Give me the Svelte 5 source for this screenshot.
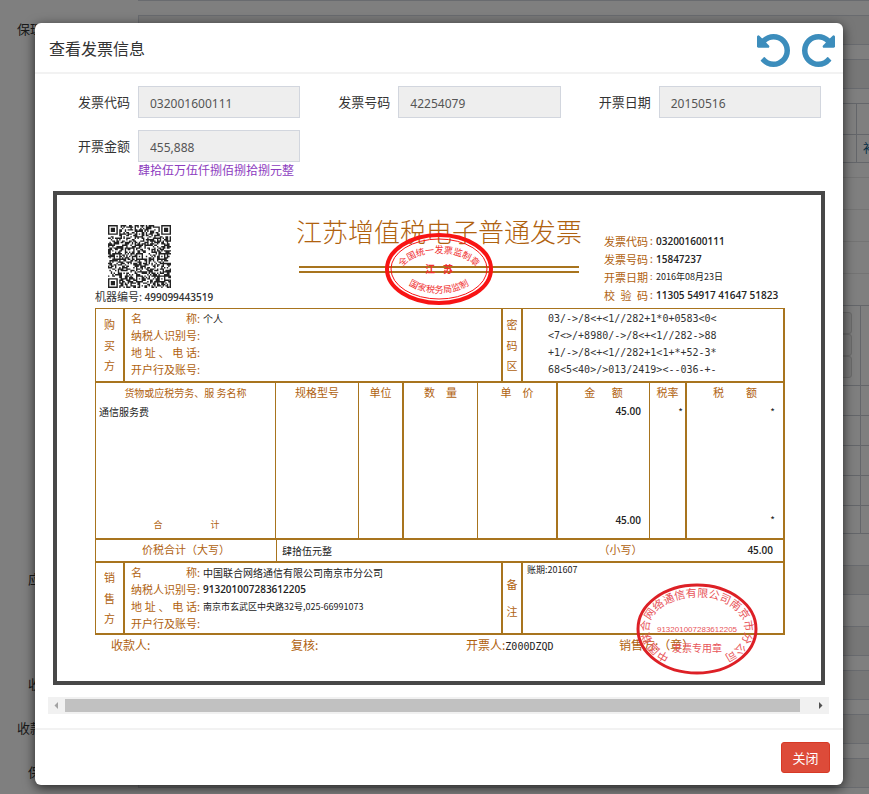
<script>
  const code = '032001600111';
  const fields = [
    { id: 'code', label: '发票代码', value: code },
    { id: 'number', label: '发票号码', value: '42254079' },
    { id: 'date', label: '开票日期', value: '20150516' },
    { id: 'amount', label: '开票金额', value: '455,888', hint: '肆拾伍万伍仟捌佰捌拾捌元整' }
  ];
  const cipher = [
    '03/->/8<+<1//282+1*0+0583<0<',
    '<7<>/+8980/->/8<+<1//282->88',
    '+1/->/8<+<1//282+1<1+*+52-3*',
    '68<5<40>/>013/2419><--036-+-'
  ];
  const meta = [
    { label: '发票代码', value: code, strong: true },
    { label: '发票号码', value: '15847237', strong: true },
    { label: '开票日期', value: '2016年08月23日' },
    { label: '校验码', value: '11305 54917 41647 51823', strong: true }
  ];
  const partyLabels = ['名称', '纳税人识别号', '地址、电话', '开户行及账号'];
  const buyer = ['个人', '', '', ''];
  const seller = [
    '中国联合网络通信有限公司南京市分公司',
    '913201007283612205',
    '南京市玄武区中央路32号,025-66991073',
    ''
  ];

  // QR symbol, version 7: 45 x 45 modules
  const size = 45;
  function square(x, y, cx, cy, r) {
    const d = Math.max(Math.abs(x - cx), Math.abs(y - cy));
    return d <= r ? d : -1;
  }
  function qrPath() {
    let seed = 20160823;
    let d = '';
    for (let y = 0; y < size; y++) {
      for (let x = 0; x < size; x++) {
        seed = (seed * 1103515245 + 12345) % 2147483648;
        let on = (seed >> 12) % 100 < 52;
        for (const [cx, cy] of [[3, 3], [41, 3], [3, 41]]) {
          const k = square(x, y, cx, cy, 4);
          if (k >= 0) on = k !== 2 && k !== 4;
        }
        for (const [cx, cy] of [[22, 6], [6, 22], [22, 22], [38, 22], [22, 38], [38, 38]]) {
          const k = square(x, y, cx, cy, 2);
          if (k >= 0) on = k !== 1;
        }
        if (on) d += `M${x} ${y}h1v1h-1z`;
      }
    }
    return d;
  }
  const qr = qrPath();
  const undo =
    'M1664 896q0 156-61 298t-164 245-245 164-298 61q-172 0-327-72.5T305 1387q-7-10-6.5-22.5t8.5-20.5l137-138q10-9 25-9 16 2 23 12 73 95 179 147t225 52q104 0 198.5-40.5T1258 1258t109.500-163.500T1408 896t-40.500-198.500T1258 534t-163.500-109.500T896 384q-98 0-188 35.500T548 521l137 138q31 30 14 69-17 40-59 40H192q-26 0-45-19t-19-45V256q0-42 40-59 39-17 69 14l130 129q107-101 244.500-156.500T896 128q156 0 298 61t245 164 164 245 61 298z';
</script>

{#snippet party(values)}
  <dl class="party">
    {#each partyLabels as label, i}
      <div>
        <dt>{#each label as ch, k}<span>{ch}{k === label.length - 1 ? ':' : ''}</span>{/each}</dt>
        <dd class:num={i === 1} class:small={i === 2}>{values[i]}</dd>
      </div>
    {/each}
  </dl>
{/snippet}

{#snippet upright(text)}
  <div class="upright">{#each text as ch}<span>{ch}</span>{/each}</div>
{/snippet}

<div class="page">
  <div class="behind" aria-hidden="true">
    <div class="cut"></div>
    <div class="row"><span>保理</span><div class="box"></div></div>
    <div class="row"><span></span><div class="box"></div></div>
    <div class="grid-a"><div></div><div></div><div></div><div class="link">补</div></div>
    <div class="list"><div></div><div></div><div></div><div></div></div>
    <div class="grid-b">
      <div class="tall"><div class="stack"><i></i><i></i><i></i></div><div></div></div>
      <div class="line"><b></b><b></b></div>
      <div class="line"><b></b><b></b></div>
      <div class="line"><b></b><b></b></div>
      <div class="line"><b></b><b></b></div>
      <div class="line"><b></b><b></b></div>
    </div>
    <div class="row wide"><span class="near">应</span><div class="box"></div></div>
    <div class="row wide"><span></span><div class="box"></div></div>
    <div class="row"><span class="near">收</span><div class="box"></div></div>
    <div class="row"><span>收款</span><div class="box"></div></div>
    <div class="row"><span class="near">保</span><div class="box"></div></div>
  </div>

  <div class="overlay">
    <div class="modal" role="dialog" aria-modal="true" aria-labelledby="modal-title">
      <header>
        <h4 id="modal-title">查看发票信息</h4>
        <button class="turn" aria-label="向左旋转">
          <svg viewBox="128 128 1536 1536"><path d={undo} /></svg>
        </button>
        <button class="turn" aria-label="向右旋转">
          <svg viewBox="128 128 1536 1536"><path transform="translate(1792 0) scale(-1 1)" d={undo} /></svg>
        </button>
      </header>

      <form>
        {#each fields as f}
          <div class="field">
            <label for={f.id}>{f.label}</label>
            <div>
              <input id={f.id} type="text" readonly value={f.value} />
              {#if f.hint}<p>{f.hint}</p>{/if}
            </div>
          </div>
        {/each}
      </form>

      <div class="invoice">
        <div class="head">
          <div class="machine">
            <svg class="qr" viewBox="0 0 45 45"><path d={qr} /></svg>
            <div><span>机器编号:</span> <b>499099443519</b></div>
          </div>
          <div class="name">
            <h5>江苏增值税电子普通发票</h5>
            <div class="rule"></div>
            <svg class="seal-top" viewBox="0 0 110 74">
              <defs>
                <path id="top-arc" d="M16 43A39 22 0 0 1 94 43" />
                <path id="bottom-arc" d="M14 36A41 25 0 0 0 96 36" />
              </defs>
              <ellipse cx="55" cy="37" rx="52" ry="34" stroke-width="4" />
              <ellipse cx="55" cy="37" rx="48" ry="30" stroke-width="1" />
              <text font-size="9"><textPath href="#top-arc" startOffset="50%">全国统一发票监制章</textPath></text>
              <text font-size="10" font-weight="700" x="46" y="41">江</text>
              <text font-size="10" font-weight="700" x="64" y="41">苏</text>
              <text font-size="9"><textPath href="#bottom-arc" startOffset="50%">国家税务局监制</textPath></text>
            </svg>
          </div>
          <dl class="meta">
            {#each meta as m}
              <div>
                <dt>{#each m.label as ch}<span>{ch}</span>{/each}</dt>
                <dd class:num={m.strong}><i>:</i>{m.value}</dd>
              </div>
            {/each}
          </dl>
        </div>

        <div class="sheet">
          <section class="buyer">
            {@render upright('购买方')}
            {@render party(buyer)}
            {@render upright('密码区')}
            <div class="cipher">{#each cipher as line}<div>{line}</div>{/each}</div>
          </section>

          <table>
            <colgroup>
              <col /><col class="c83" /><col class="c45" /><col class="c74" /><col class="c80" /><col class="c92" /><col class="c37" /><col class="c96" />
            </colgroup>
            <thead>
              <tr>
                <th class="long">货物或应税劳务、服 务名称</th><th>规格型号</th><th>单位</th><th>数&emsp;量</th><th>单&emsp;价</th><th>金&emsp;&ensp;额</th><th>税率</th><th>税&emsp;&emsp;额</th>
              </tr>
            </thead>
            <tbody>
              <tr class="item">
                <td class="left">通信服务费</td><td></td><td></td><td></td><td></td><td class="num">45.00</td><td>*</td><td>*</td>
              </tr>
              <tr class="sum">
                <td class="sum-label"><span>合</span><span>计</span></td><td></td><td></td><td></td><td></td><td class="num">45.00</td><td></td><td>*</td>
              </tr>
            </tbody>
          </table>

          <section class="total">
            <div class="caption">价税合计（大写）</div>
            <div class="words">肆拾伍元整</div>
            <div class="caption">（小写）</div>
            <div class="num">45.00</div>
          </section>

          <section class="seller">
            {@render upright('销售方')}
            {@render party(seller)}
            {@render upright('备注')}
            <div class="remark">账期:201607</div>
          </section>
        </div>

        <div class="sign">
          <div>收款人:</div>
          <div>复核:</div>
          <div>开票人:<span>Z000DZQD</span></div>
          <div>销售方:（章）</div>
          <svg class="seal-bottom" viewBox="0 0 122 92">
            <defs><path id="ring" d="M61 78A48 32 0 0 1 61 14A48 32 0 0 1 61 78" /></defs>
            <ellipse cx="61" cy="46" rx="59" ry="44" stroke-width="3" />
            <text font-size="11"><textPath href="#ring" startOffset="50%">中国联合网络通信有限公司南京市分公司</textPath></text>
            <text class="digits" font-size="8" x="61" y="49">913201007283612205</text>
            <text font-size="10" x="61" y="69">发票专用章</text>
          </svg>
        </div>
      </div>

      <div class="scroll">
        <button aria-label="向左滚动"><svg viewBox="0 0 17 17"><path fill="#a3a3a3" d="M10 5v7L6.500 8.500z" /></svg></button>
        <div class="track"><div class="thumb"></div></div>
        <button aria-label="向右滚动"><svg viewBox="0 0 17 17"><path fill="#505050" d="M7 5v7l3.500-3.500z" /></svg></button>
      </div>

      <footer><button class="close">关闭</button></footer>
    </div>
  </div>
</div>

<style>
  :global(body) { background: #fff; }
  * { box-sizing: border-box; }
  .page {
    display: grid;
    min-height: 100vh;
    overflow: hidden;
    font: 13px/18px "Noto Sans", "Noto Sans CJK SC", sans-serif;
    color: #333;
  }
  .behind, .overlay { grid-area: 1 / 1; min-width: 0; }
  h4, h5, p, dl, dd { margin: 0; font-weight: 400; }
  i { font-style: normal; }
  button { padding: 0; border: 0; background: none; font: inherit; cursor: pointer; }

  /* form underneath the dialog */
  .cut { height: 1px; margin-left: 138px; background: #d2d6de; }
  .row { display: grid; grid-template-columns: 138px 1fr; height: 30px; margin-top: 14px; line-height: 28px; }
  .row span { padding-left: 17px; }
  .row .near { padding-left: 28px; }
  .row.wide { margin-top: 31px; }
  .box { background: #eee; border: 1px solid #d2d6de; border-right: 0; }
  .grid-a { display: grid; grid-template: 31px 28px / 1fr 13px; height: 60px; margin: 14px 0 14px 138px; border-top: 1px solid #c8ccd4; }
  .grid-a div { border-bottom: 1px solid #c8ccd4; line-height: 28px; }
  .grid-a div:nth-child(even) { border-left: 1px solid #c8ccd4; }
  .grid-a .link { padding-left: 6px; font-size: 12px; color: #0b5c8a; white-space: nowrap; overflow: hidden; }
  .list { margin-left: 138px; }
  .list div { height: 32px; border-top: 1px solid #e8e8e8; }
  .grid-b { margin-left: 138px; border-top: 1px solid #c8ccd4; }
  .tall { display: grid; grid-template-columns: 1fr 9px; height: 80px; border-bottom: 1px solid #c8ccd4; }
  .tall > div + div { border-left: 1px solid #c8ccd4; }
  .stack { padding: 6px 8px 0 0; }
  .stack i { display: block; height: 22px; border: 1px solid #d4d4d4; border-radius: 3px; background: #f0f0f0; }
  .line { display: grid; grid-template-columns: 1fr 9px; height: 30px; border-bottom: 1px solid #c8ccd4; }
  .line:last-child { height: 28px; }
  .line b + b { border-left: 1px solid #c8ccd4; }

  .overlay { padding: 23px 26px 9px 35px; background: rgba(0, 0, 0, 0.5); }
  .modal { background: #fff; border-radius: 6px; box-shadow: 0 3px 12px rgba(0, 0, 0, 0.7); }
  header { display: flex; align-items: center; gap: 12px; height: 51px; padding: 4px 8px 0 14px; border-bottom: 2px solid #f2f2f2; }
  h4 { flex: 1; font-size: 16px; line-height: 26px; padding-bottom: 2px; }
  .turn, .turn svg { display: block; width: 33px; height: 33px; }
  .turn { margin-top: 2px; }
  .turn svg { fill: #3c8dbc; }

  form { display: grid; grid-template-columns: repeat(3, 1fr); row-gap: 12px; padding: 12px 14px 12px 13px; }
  .field { display: grid; grid-template-columns: 82px minmax(0, 1fr); gap: 8px; padding-right: 8px; }
  .field label { text-align: right; line-height: 32px; }
  .field input {
    display: block; width: 100%; height: 32px; padding: 3px 11px 0; border: 1px solid #d2d6de; border-radius: 0;
    background: #eee; color: #555; font: 12px "Noto Sans", sans-serif; outline: 0;
  }
  .field p { font-size: 12px; line-height: 17px; color: #8d3cc0; white-space: nowrap; }

  .invoice {
    margin: 0 18px; border: 4px solid #484848; padding: 0 36px 0 38px; color: #222;
    font: 10px/17px "Noto Sans CJK SC", sans-serif;
  }
  .num { font-family: "Open Sans", sans-serif; font-weight: 600; }
  .head { display: flex; justify-content: space-between; height: 113px; color: #b0620f; }
  .machine { width: 179px; padding-top: 30px; color: #333; font-size: 11px; }
  .qr { display: block; width: 63px; height: 63px; margin-left: 13px; fill: #222; }
  .machine b { font: 600 10px "Open Sans", sans-serif; }
  .name { position: relative; width: 286px; padding-top: 19px; }
  h5 { font-size: 26px; font-weight: 300; line-height: 34px; white-space: nowrap; }
  .rule { height: 7px; margin: 18px 3px 0; border: solid #a8741e; border-width: 2px 0; }
  .seal-top { position: absolute; left: 88px; top: 37px; width: 110px; }
  .seal-top, .seal-bottom { fill: none; stroke: #f81414; text-anchor: middle; }
  .seal-top text { fill: #f03030; stroke: none; }
  .meta { width: 181px; padding-top: 37px; }
  .meta div { display: flex; line-height: 18px; height: 18px; white-space: nowrap; }
  .meta dt { display: flex; justify-content: space-between; width: 44px; font-size: 11px; }
  .meta dd { color: #222; }
  .meta dd:not(.num) { font-size: 9px; }
  .meta i { display: inline-block; width: 8px; padding-left: 2px; color: #b0620f; }

  .sheet { border: solid #a8741e; border-width: 1px 2px 2px 1px; }
  .buyer, .seller { display: grid; grid-template-columns: 29px minmax(0, 1fr) 20px 260px; color: #b0620f; }
  .buyer { height: 74px; border-bottom: 2px solid #a8741e; }
  .seller { height: 70px; }
  .upright { display: flex; flex-direction: column; align-items: center; justify-content: space-evenly; font-size: 11px; line-height: 11px; border-right: 2px solid #a8741e; }
  .party { padding: 1px 0 0 6px; border-right: 2px solid #a8741e; }
  .party div { display: flex; gap: 3px; height: 17px; white-space: nowrap; }
  .party dt { display: flex; justify-content: space-between; width: 69px; font-size: 11px; }
  .party dd { color: #222; }
  .party .small { font-size: 9px; }
  .cipher { padding: 1px 0 0 25px; color: #333; font: 10px/17px "DejaVu Sans Mono", monospace; white-space: pre; }

  table { width: 100%; table-layout: fixed; border-collapse: separate; border-spacing: 0; border-bottom: 2px solid #a8741e; }
  .c83 { width: 83px; } .c45 { width: 45px; } .c74 { width: 74px; } .c80 { width: 80px; }
  .c92 { width: 92px; } .c37 { width: 37px; } .c96 { width: 96px; }
  th, td { padding: 0 8px 0 0; border-right: 1px solid #a8741e; line-height: 19px; text-align: right; vertical-align: top; }
  th { padding: 0; font-size: 11px; font-weight: 400; color: #b0620f; text-align: center; white-space: nowrap; }
  th.long { font-size: 10px; }
  th:nth-child(3), td:nth-child(3), th:nth-child(5), td:nth-child(5), th:nth-child(7), td:nth-child(7) { border-right-width: 2px; }
  th:last-child, td:last-child { border-right: 0; }
  td:nth-child(7) { padding-right: 2px; }
  td.left { padding-left: 3px; text-align: left; }
  .item td { height: 109px; }
  .sum td { height: 27px; line-height: 18px; }
  .sum .sum-label { padding: 0 0 0 2px; text-align: center; font-size: 9px; line-height: 27px; color: #b0620f; }
  .sum-label span { margin: 0 24px; }

  .total { display: grid; grid-template-columns: minmax(0, 1fr) 298px 93px 116px; height: 23px; border-bottom: 2px solid #a8741e; line-height: 21px; }
  .caption { text-align: center; font-size: 11px; line-height: 19px; color: #b0620f; }
  .total .words { padding-left: 5px; border-left: 1px solid #a8741e; }
  .total .num { text-align: right; padding-right: 10px; }
  .remark { padding-left: 4px; font-size: 9px; line-height: 14px; color: #222; }

  .sign { position: relative; display: grid; grid-template-columns: 180px 175px minmax(0, 1fr) 166px; height: 46px; padding-left: 16px; font-size: 12px; line-height: 20px; color: #b0620f; white-space: nowrap; }
  .sign span { color: #222; font: 10px "DejaVu Sans Mono", monospace; }
  .seal-bottom { position: absolute; right: 27px; bottom: 6px; width: 122px; stroke: #dd2026; }
  .seal-bottom text { fill: #e8555a; stroke: none; }
  .seal-bottom .digits { font-family: "Liberation Sans", sans-serif; }

  .scroll { display: flex; height: 17px; margin: 12px 14px 14px 13px; background: #f1f1f1; }
  .scroll button, .scroll svg { display: block; width: 17px; height: 17px; }
  .track { flex: 1; padding: 2px 0; }
  .thumb { width: 98.4%; height: 13px; background: #c1c1c1; }
  footer { display: flex; justify-content: flex-end; padding: 12px 13px; border-top: 2px solid #f2f2f2; }
  .close { width: 49px; height: 31px; border: 1px solid #d73925; border-radius: 3px; background: #dd4b39; color: #fff; }
</style>
